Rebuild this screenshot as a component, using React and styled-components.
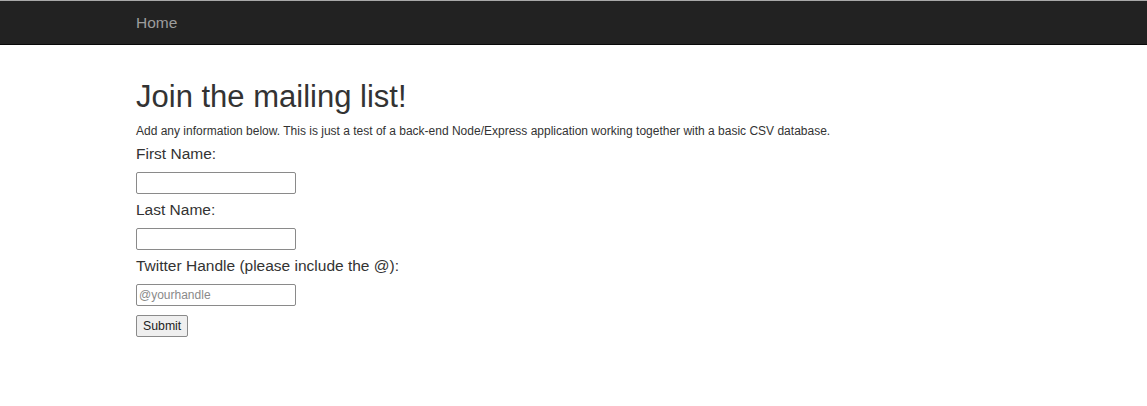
import styled, { createGlobalStyle } from "styled-components";

const GlobalStyle = createGlobalStyle`
  html, body {
    margin: 0;
    padding: 0;
    background: #fff;
    font-family: "Liberation Sans", Helvetica, Arial, sans-serif;
    color: #333;
  }
  * { box-sizing: border-box; }
`;

const Navbar = styled.nav`
  height: 45px;
  background: #222;
  border-top: 1px solid #a9a9a9;
  border-bottom: 1px solid #080808;
  display: flex;
  align-items: center;
  padding-left: 136px;
`;

const NavLink = styled.a`
  font-size: 15.5px;
  color: #9d9d9d;
  text-decoration: none;
  line-height: 20px;
`;

const Container = styled.main`
  padding: 35px 0 0 136px;
`;

const Title = styled.h1`
  font-size: 31px;
  font-weight: 400;
  line-height: 34px;
  margin: 0 0 8px;
`;

const Intro = styled.p`
  font-size: 12px;
  line-height: 18px;
  margin: 0 0 4px;
`;

const Form = styled.form`
  display: flex;
  flex-direction: column;
  align-items: flex-start;
`;

const Label = styled.label`
  display: block;
  font-size: 15.5px;
  line-height: 20px;
  margin-bottom: 8px;
`;

const Input = styled.input`
  width: 160px;
  height: 22px;
  margin: 0 0 6px;
  padding: 1px 2px;
  border: 1px solid #8a8a8a;
  border-radius: 2px;
  font-family: "Liberation Sans", Arial, sans-serif;
  font-size: 12px;
  color: #333;
  &::placeholder {
    color: #8a8a8a;
  }
`;

const Button = styled.button`
  margin-top: 3px;
  height: 22px;
  padding: 0 6px;
  font-family: "Liberation Sans", Arial, sans-serif;
  font-size: 12.3px;
  color: #222;
  background: #efefef;
  border: 1px solid #8a8a8a;
  border-radius: 2px;
`;

const fields = [
  { id: "first", label: "First Name:" },
  { id: "last", label: "Last Name:" },
  { id: "twitter", label: "Twitter Handle (please include the @):", placeholder: "@yourhandle" },
];

export default function App() {
  return (
    <>
      <GlobalStyle />
      <Navbar>
        <NavLink href="#">Home</NavLink>
      </Navbar>
      <Container>
        <Title>Join the mailing list!</Title>
        <Intro>
          Add any information below. This is just a test of a back-end Node/Express application working together with a basic CSV database.
        </Intro>
        <Form onSubmit={e => e.preventDefault()}>
          {fields.map(f => (
            <div key={f.id}>
              <Label htmlFor={f.id}>{f.label}</Label>
              <Input id={f.id} type="text" placeholder={f.placeholder} />
            </div>
          ))}
          <Button type="submit">Submit</Button>
        </Form>
      </Container>
    </>
  );
}
